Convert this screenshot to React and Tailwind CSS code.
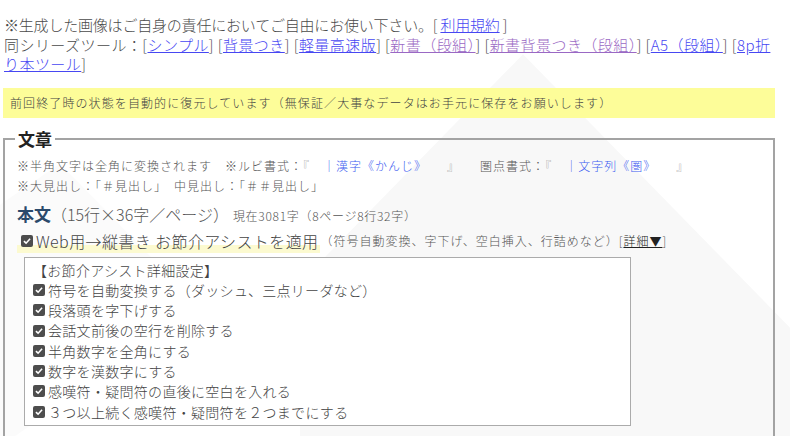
import React from "react";

const jp = "font-['Noto_Sans_CJK_JP','Noto_Sans_CJK_SC',sans-serif]";

function Check() {
  return (
    <span className="inline-flex h-[12px] w-[12px] shrink-0 items-center justify-center rounded-[2px] bg-[#4d4d4d] align-[-1px]">
      <svg viewBox="0 0 12 12" className="h-[10px] w-[10px]">
        <path d="M2.3 6.2 L4.9 8.6 L9.7 3.4" fill="none" stroke="#fff" strokeWidth="1.9" />
      </svg>
    </span>
  );
}

const assists = [
  "符号を自動変換する（ダッシュ、三点リーダなど）",
  "段落頭を字下げする",
  "会話文前後の空行を削除する",
  "半角数字を全角にする",
  "数字を漢数字にする",
  "感嘆符・疑問符の直後に空白を入れる",
  "３つ以上続く感嘆符・疑問符を２つまでにする",
];

function Link({ visited, children }) {
  return (
    <a href="#" className={visited ? "text-[#9a68c4] underline" : "text-[#4747f2] underline"}>
      {children}
    </a>
  );
}

export default function App() {
  return (
    <div className={`relative min-h-[436px] overflow-hidden bg-white font-light text-[#4a4a4a] ${jp}`}>
      {/* faint mountain pattern in the background */}
      <svg className="pointer-events-none absolute inset-0 h-full w-full" viewBox="0 0 800 436" preserveAspectRatio="none">
        <polygon points="523,53 790,320 790,436 300,436 300,276" fill="#f8f8f8" />
        <polygon points="0,200 60,160 200,300 0,436" fill="#fbfbfb" />
      </svg>

      <div className="relative w-[775px] pl-[3px] pt-[15px]">
        <div className="pl-[1px] text-[15px] leading-[19.5px]">
          <p className="tracking-[-0.2px]">
            ※生成した画像はご自身の責任においてご自由にお使い下さい。[ <Link>利用規約</Link> ]
          </p>
          <p className="tracking-[0.45px]">
            同シリーズツール：[<Link>シンプル</Link>] [<Link>背景つき</Link>] [<Link>軽量高速版</Link>] [
            <Link visited>新書（段組）</Link>] [<Link visited>新書背景つき（段組）</Link>] [
            <Link>A5（段組）</Link>] [<Link>8p折り本ツール</Link>]
          </p>
        </div>

        <div className="mt-[14px] flex h-[30px] items-center bg-[#fdfd99] pl-[7px] text-[12px] tracking-[1.1px] text-[#444]">
          前回終了時の状態を自動的に復元しています（無保証／大事なデータはお手元に保存をお願いします）
        </div>

        <fieldset className="mt-[9px] h-[320px] border-2 border-[#a3a3a3] px-[12px]">
          <legend className="ml-[-2px] px-[3px] text-[17px] font-bold leading-[24px] text-[#222]">文章</legend>

          <div className="pt-[5px] text-[12px] leading-[20px] tracking-[1px] text-[#555]">
            <p>
              ※半角文字は全角に変換されます　※ルビ書式：<span className="text-[#999]">『</span>{"　"}
              <span className="text-[#3d5cf0]">｜漢字《かんじ》</span>{"　　"}
              <span className="text-[#999]">』</span>{"　　"}圏点書式：<span className="text-[#999]">『</span>{"　"}
              <span className="text-[#3d5cf0]">｜文字列《圏》</span>{"　　"}
              <span className="text-[#999]">』</span>
            </p>
            <p>※大見出し：「＃見出し」　中見出し：「＃＃見出し」</p>
          </div>

          <div className="mt-[5px] flex items-baseline leading-[26px]">
            <span className="text-[17px] font-bold text-[#2b4a6b]">本文</span>
            <span className="text-[16px] text-[#555]">（15行×36字／ページ）</span>
            <span className="ml-[4px] text-[12px] tracking-[0.7px] text-[#555]">現在3081字（8ページ8行32字）</span>
          </div>

          <div className="flex items-baseline leading-[24px]">
            <label className="flex items-center gap-[3px] bg-[linear-gradient(transparent_68%,#fcfad0_68%)] pl-[4px] pr-[2px] text-[16px] tracking-[0.4px] text-[#444]">
              <Check />
              <span>Web用→縦書き お節介アシストを適用</span>
            </label>
            <span className="text-[12px] tracking-[1px] text-[#555]">
              （符号自動変換、字下げ、空白挿入、行詰めなど）[
              <span className="text-[#222] underline">詳細▼</span>]
            </span>
          </div>

          <div className="ml-[7px] mt-[4px] w-[607px] border border-[#ababab] bg-white pb-[3px] pl-[8px] pt-[2px] text-[14px] leading-[20.3px] tracking-[0.3px] text-[#444]">
            <p>【お節介アシスト詳細設定】</p>
            {assists.map((a) => (
              <p key={a} className="flex items-center gap-[3px]">
                <Check />
                <span>{a}</span>
              </p>
            ))}
          </div>
        </fieldset>
      </div>
    </div>
  );
}
